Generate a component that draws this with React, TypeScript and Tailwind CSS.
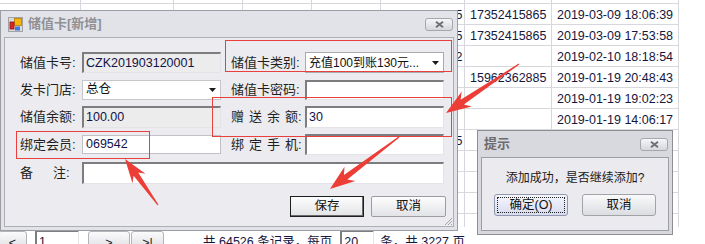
import React from 'react'

const font = "font-['Liberation_Sans','Noto_Sans_CJK_SC',sans-serif]"

const colW = ['w-[81px]', 'w-[93px]', 'w-[69px]', 'w-[69px]', 'w-[69px]', 'w-[84px]', 'w-[87px]', 'w-[127px]']

const header = ['', '储值卡类别名', '状态', '', '', '', '', '']

const rows: string[][] = [
  ['', '', '', '', '', '13852415865', '17352415865', '2019-03-09 18:06:39'],
  ['', '', '', '', '', '13852415865', '17352415865', '2019-03-09 17:53:58'],
  ['', '', '', '', '', '13962362882', '', '2019-02-10 18:18:54'],
  ['', '', '', '', '', '', '15962362885', '2019-01-19 20:48:43'],
  ['', '', '', '', '', '', '', '2019-01-19 19:02:23'],
  ['', '', '', '', '', '', '', '2019-01-19 14:06:17'],
  ['', '', '', '', '', '13852415865', '', '2019-01-18 16:32:09'],
  ['', '', '', '', '', '', '', '2019-01-18 11:20:49'],
  ['', '', '', '', '', '', '', '2019-01-17 19:45:19'],
  ['', '', '', '', '', '', '', '2019-01-17 10:08:29'],
  ['', '', '', '', '', '', '', '2019-01-16 15:51:59'],
]

const sunken =
  'border-t-2 border-l-2 border-r border-b border-t-[#7d7d80] border-l-[#7d7d80] border-r-[#e4e4e8] border-b-[#e4e4e8]'

// tapered annotation arrow, tail -> tip
function arrow(tx: number, ty: number, hx: number, hy: number, hl: number, hw: number) {
  const len = Math.hypot(hx - tx, hy - ty)
  const dx = (hx - tx) / len
  const dy = (hy - ty) / len
  const nx = -dy
  const ny = dx
  const p = (back: number, side: number) =>
    `${(hx - dx * back + nx * side).toFixed(1)},${(hy - dy * back + ny * side).toFixed(1)}`
  return [p(len, 0.6), p(hl * 0.78, 2.8), p(hl, hw / 2), p(0, 0), p(hl, -hw / 2), p(hl * 0.78, -2.8), p(len, -0.6)].join(' ')
}

function CloseBtn() {
  return (
    <div className="w-[28px] h-[13px] rounded-[3px] border border-[#a6a7ad] bg-linear-to-b from-[#f6f6f8] to-[#d6d7dc] flex items-center justify-center">
      <svg width="9" height="7" viewBox="0 0 9 7">
        <path d="M1 0.8 L8 6.2 M8 0.8 L1 6.2" stroke="#6f7076" strokeWidth="2" />
      </svg>
    </div>
  )
}

function WinIcon() {
  return (
    <svg width="15" height="15" viewBox="0 0 15 15">
      <rect x="0.5" y="0.5" width="14" height="14" fill="#d9d9de" stroke="#a2a2a8" />
      <rect x="6.5" y="1.5" width="7" height="7" fill="#f5b50a" stroke="#b57d00" strokeWidth="0.8" />
      <rect x="2" y="5" width="4" height="7" fill="#e02525" stroke="#8e1414" strokeWidth="0.8" />
      <rect x="7" y="9.5" width="5" height="4" fill="#3b7de2" />
    </svg>
  )
}

function Arrow() {
  return (
    <svg width="7" height="4" viewBox="0 0 7 4" className="shrink-0">
      <path d="M0 0 H7 L3.5 4 Z" fill="#1a1a1a" />
    </svg>
  )
}

function Grid() {
  return (
    <div className="h-[227px] overflow-hidden">
      <div className="-mt-[17px]">
        <div className="flex h-[21px]">
          {header.map((h, i) => (
            <div
              key={i}
              className={`${colW[i]} shrink-0 border-r border-b border-[#d7d8de] flex items-end pl-[5px] leading-[15px] text-[#3a3a3a]`}
            >
              {h}
            </div>
          ))}
        </div>
        {rows.map((r, ri) => (
          <div key={ri} className="flex h-[21px]">
            {r.map((c, ci) => (
              <div
                key={ci}
                className={`${colW[ci]} shrink-0 border-r border-b border-[#d7d8de] flex items-center pl-[5px] pt-[2px] whitespace-nowrap overflow-hidden text-[#16163e]`}
              >
                {c}
              </div>
            ))}
          </div>
        ))}
      </div>
    </div>
  )
}

function Pager() {
  const btn =
    'h-[16px] border border-[#b2b3b9] rounded-t-[3px] bg-linear-to-b from-[#fbfbfc] to-[#e3e4e8] flex justify-center pt-[4px] leading-[14px] text-[#222]'
  return (
    <div className="flex items-start h-[17px] pt-[4px] leading-[15px] text-[#16163e]">
      <div className={`${btn} -ml-[2px] w-[29px]`}>&lt;</div>
      <div className={`${sunken} ml-[8px] -mt-[1px] w-[44px] h-[16px] bg-white pl-[2px] pt-[3px]`}>1</div>
      <div className={`${btn} ml-[9px] w-[42px]`}>&gt;</div>
      <div className={`${btn} ml-[1px] w-[33px]`}>&gt;|</div>
      <div className="ml-[39px] pt-[4px]">共 64526 条记录，每页</div>
      <div className={`${sunken} ml-[8px] -mt-[1px] w-[34px] h-[16px] bg-white pl-[2px] pt-[3px]`}>20</div>
      <div className="ml-[6px] pt-[4px]">条，共 3227 页</div>
    </div>
  )
}

function CardDialog() {
  const label = 'w-[62px] shrink-0 text-[13px] text-[#1f1f22]'
  const rlabel = 'w-[74px] shrink-0 text-[13px] text-[#1f1f22]'
  const val = 'text-[#12124a]'
  return (
    <div className="absolute left-0 top-[10px] w-[458px] h-[221px] border border-[#9c9da3] bg-[#e2e3e8] flex flex-col">
      <div className="h-[26px] shrink-0 flex items-center pl-[7px] pr-[4px]">
        <WinIcon />
        <span className="ml-[5px] text-[13px] font-bold text-[#909095]">储值卡[新增]</span>
        <div className="ml-auto">
          <CloseBtn />
        </div>
      </div>
      <div className="relative flex-1 mx-[3px] mb-[3px] border border-[#aeafb5] bg-[#ececf0] pl-[15px] pt-[14px] flex flex-col">
        <div className="flex items-center h-[21px]">
          <div className={label}>储值卡号:</div>
          <div className={`${sunken} w-[139px] h-[21px] bg-[#ececec] flex items-center pl-[2px] ${val}`}>CZK201903120001</div>
          <div className="w-[10px]" />
          <div className={rlabel}>储值卡类别:</div>
          <div className="w-[139px] h-[21px] border border-[#a9a9ae] bg-white flex items-center pl-[3px] pr-[4px] gap-1 text-[#111]">
            <span className="flex-1 whitespace-nowrap text-[12px]">充值100到账130元...</span>
            <Arrow />
          </div>
        </div>
        <div className="flex items-center h-[21px] mt-[6px]">
          <div className={label}>发卡门店:</div>
          <div className="w-[139px] h-[20px] border border-[#c6c6cb] bg-white flex items-center pl-[3px] pr-[4px] text-[#111]">
            <span className="flex-1">总仓</span>
            <Arrow />
          </div>
          <div className="w-[10px]" />
          <div className={rlabel}>储值卡密码:</div>
          <div className={`${sunken} w-[139px] h-[20px] bg-white`} />
        </div>
        <div className="flex items-center h-[21px] mt-[6px]">
          <div className={label}>储值余额:</div>
          <div className={`${sunken} w-[139px] h-[22px] bg-[#ececec] flex items-center pl-[2px] ${val}`}>100.00</div>
          <div className="w-[10px]" />
          <div className={rlabel}>
            <span className="tracking-[5px]">赠送余</span>额:
          </div>
          <div className={`${sunken} w-[139px] h-[22px] bg-white flex items-center pl-[2px] ${val}`}>30</div>
        </div>
        <div className="flex items-center h-[21px] mt-[7px]">
          <div className={label}>绑定会员:</div>
          <div className="w-[139px] h-[19px] border border-[#c0c0c6] bg-white flex items-center pl-[3px] text-[#12124a]">069542</div>
          <div className="w-[10px]" />
          <div className={rlabel}>
            <span className="tracking-[5px]">绑定手</span>机:
          </div>
          <div className={`${sunken} w-[139px] h-[21px] bg-white`} />
        </div>
        <div className="flex items-center h-[21px] mt-[7px]">
          <div className={label}>
            <span className="mr-[20px]">备</span>注:
          </div>
          <div className={`${sunken} w-[362px] h-[22px] bg-white`} />
        </div>
        <div className="flex justify-end gap-[7px] pr-[7px] mt-[13px]">
          <button className="w-[74px] h-[21px] border border-[#1e1e1e] shadow-[inset_-1px_-1px_0_#6a6a6a] bg-linear-to-b from-[#fdfdfd] to-[#e2e3e6] text-[12.5px] text-[#111]">
            保存
          </button>
          <button className="w-[75px] h-[21px] border border-[#9c9ca2] rounded-[2px] bg-linear-to-b from-[#fdfdfd] to-[#e2e3e6] text-[12.5px] text-[#111]">
            取消
          </button>
        </div>
        <svg width="10" height="10" viewBox="0 0 10 10" className="absolute right-0 bottom-0">
          <path d="M9 2 L2 9 M9 5 L5 9 M9 8 L8 9" stroke="#a3a4aa" strokeWidth="1" />
        </svg>
      </div>
    </div>
  )
}

function TipDialog() {
  const btn = 'relative w-[74px] h-[22px] rounded-[3px] text-[12.5px] text-[#111]'
  return (
    <div className="absolute left-[477px] top-[130px] w-[196px] h-[105px] border border-[#8e8f95] bg-[#d8d9de] flex flex-col">
      <div className="h-[26px] shrink-0 flex items-center pl-[6px] pr-[4px]">
        <span className="text-[13px] font-bold text-[#6b6b70]">提示</span>
        <div className="ml-auto">
          <CloseBtn />
        </div>
      </div>
      <div className="flex-1 mx-[3px] mb-[3px] border border-[#9d9ea4] bg-[#ebebef] flex flex-col items-center pt-[12px]">
        <div className="text-[12px] leading-[16px] text-[#1a1a1a]">添加成功，是否继续添加?</div>
        <div className="flex gap-[14px] mt-[8px]">
          <button className={`${btn} border border-[#9196ad] bg-linear-to-b from-[#f6f7fd] to-[#d6dbef] outline-1 outline-dotted outline-[#222] outline-offset-[-4px]`}>
            确定(O)
          </button>
          <button className={`${btn} border border-[#a2a3a9] bg-linear-to-b from-[#fafafb] to-[#dcdde1]`}>取消</button>
        </div>
      </div>
    </div>
  )
}

export default function App() {
  return (
    <div className={`relative w-[705px] h-[244px] overflow-hidden bg-white text-[12.5px] ${font}`}>
      <Grid />
      <Pager />
      <CardDialog />

      {/* annotation boxes */}
      <div className="absolute left-[225px] top-[40px] w-[227px] h-[32px] border border-[#e8403c]" />
      <div className="absolute left-[212px] top-[97px] w-[240px] h-[40px] border border-[#e8403c]" />
      <div className="absolute left-[16px] top-[131px] w-[134px] h-[28px] border border-[#e8403c]" />

      <TipDialog />

      <svg width="705" height="244" className="absolute inset-0 pointer-events-none">
        <polygon points={arrow(158, 205, 125, 159, 24, 16)} fill="#ec3d37" />
        <polygon points={arrow(399, 137, 330, 189, 25, 18)} fill="#ec3d37" />
        <polygon points={arrow(519, 64, 446, 113, 25, 18)} fill="#ec3d37" />
      </svg>
    </div>
  )
}
